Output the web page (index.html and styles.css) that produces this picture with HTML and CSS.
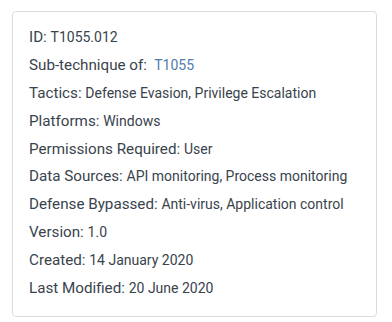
FILE: index.html
```html
<!DOCTYPE html>
<html>
<head>
<meta charset="utf-8">
<link rel="stylesheet" href="styles.css">
</head>
<body>
<div class="card">
  <div class="row"><span class="label">ID:&nbsp;</span>T1055.012</div>
  <div class="row"><span class="label">Sub-technique of:&nbsp;</span>&nbsp;<a class="link" href="#">T1055</a></div>
  <div class="row"><span class="label">Tactics:&nbsp;</span>Defense Evasion, Privilege Escalation</div>
  <div class="row"><span class="label">Platforms:&nbsp;</span>Windows</div>
  <div class="row"><span class="label">Permissions Required:&nbsp;</span>User</div>
  <div class="row"><span class="label">Data Sources:&nbsp;</span>API monitoring, Process monitoring</div>
  <div class="row"><span class="label">Defense Bypassed:&nbsp;</span>Anti-virus, Application control</div>
  <div class="row"><span class="label">Version:&nbsp;</span>1.0</div>
  <div class="row"><span class="label">Created:&nbsp;</span>14 January 2020</div>
  <div class="row"><span class="label">Last Modified:&nbsp;</span>20 June 2020</div>
</div>
</body>
</html>
```
FILE: styles.css
```css
html, body {
  margin: 0;
  padding: 0;
  background: #fff;
}
body {
  font-family: Roboto, "Liberation Sans", sans-serif;
  color: #39434c;
  padding: 11px 0 0 12px;
}
.card {
  width: 365px;
  height: 306px;
  box-sizing: border-box;
  border: 1px solid #dcdcdc;
  border-radius: 4px;
  padding: 12px 16px 0 16px;
}
.row {
  font-size: 14px;
  height: 27.9px;
  line-height: 27.9px;
  white-space: nowrap;
}
.label {
  font-size: 15.2px;
  font-weight: 400;
  line-height: 1;
}
.link {
  color: #4f7cac;
  text-decoration: none;
}
```
